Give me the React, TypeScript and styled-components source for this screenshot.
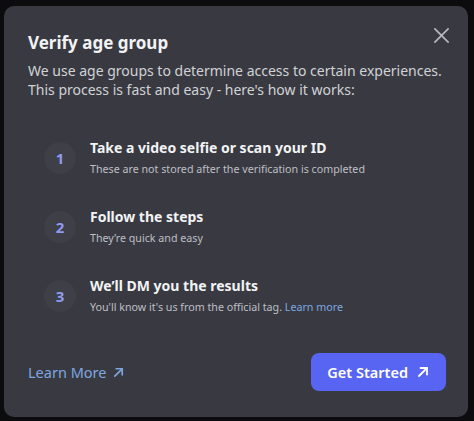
import React from 'react';
import styled, { createGlobalStyle } from 'styled-components';

const GlobalStyle = createGlobalStyle`
  body {
    margin: 0;
    background: #0c0c0e;
    font-family: "Noto Sans", "Open Sans", sans-serif;
  }
`;

const Page = styled.div`
  width: 474px;
  height: 421px;
  padding: 6px 6px 4px 4px;
  box-sizing: border-box;
`;

const Modal = styled.div`
  position: relative;
  height: 100%;
  box-sizing: border-box;
  background: #393a41;
  border-radius: 10px;
  padding: 25px 22px 26px 24px;
  display: flex;
  flex-direction: column;
`;

const CloseButton = styled.button`
  position: absolute;
  top: 14px;
  right: 12px;
  width: 30px;
  height: 30px;
  border: none;
  background: transparent;
  padding: 0;
  display: flex;
  align-items: center;
  justify-content: center;
  color: #b5b8bf;
  cursor: pointer;
`;

const Title = styled.h1`
  margin: 0;
  font-size: 17px;
  font-weight: 700;
  color: #f2f3f5;
  line-height: 24px;
`;

const Description = styled.p`
  margin: 6px 0 0;
  font-size: 14px;
  line-height: 19px;
  color: #d0d2d6;
`;

const StepList = styled.div`
  display: flex;
  flex-direction: column;
  gap: 30px;
  margin-top: 39px;
  padding-left: 16px;
`;

const Step = styled.div`
  display: flex;
  align-items: center;
  gap: 14px;
`;

const StepNumber = styled.div`
  width: 32px;
  height: 32px;
  border-radius: 50%;
  background: #3e3f47;
  color: #8e9bf0;
  font-size: 15px;
  font-weight: 700;
  display: flex;
  align-items: center;
  justify-content: center;
  flex-shrink: 0;
`;

const StepText = styled.div`
  display: flex;
  flex-direction: column;
  gap: 3px;
`;

const StepTitle = styled.div`
  font-size: 14px;
  font-weight: 700;
  color: #f2f3f5;
  line-height: 20px;
`;

const StepSub = styled.div`
  font-size: 10.7px;
  color: #bdbfc5;
  line-height: 16px;
`;

const InlineLink = styled.a`
  color: #7ea6e0;
  text-decoration: none;
`;

const Footer = styled.div`
  margin-top: auto;
  display: flex;
  align-items: center;
  justify-content: space-between;
`;

const FooterLink = styled.a`
  display: flex;
  align-items: center;
  gap: 6px;
  color: #7ea6e0;
  font-size: 14.5px;
  text-decoration: none;
`;

const PrimaryButton = styled.button`
  display: flex;
  align-items: center;
  gap: 8px;
  height: 38px;
  padding: 0 16px;
  border: none;
  border-radius: 8px;
  background: #5865f2;
  color: #ffffff;
  font-family: inherit;
  font-size: 14.5px;
  font-weight: 600;
  cursor: pointer;
`;

const ArrowIcon = ({ size = 14 }: { size?: number }) => (
  <svg width={size} height={size} viewBox="0 0 14 14" fill="none" stroke="currentColor" strokeWidth="1.8" strokeLinecap="round" strokeLinejoin="round">
    <path d="M3 11L11 3" />
    <path d="M4.5 3H11V9.5" />
  </svg>
);

interface StepItem {
  id: number;
  title: string;
  sub: React.ReactNode;
}

const steps: StepItem[] = [
  { id: 1, title: 'Take a video selfie or scan your ID', sub: 'These are not stored after the verification is completed' },
  { id: 2, title: 'Follow the steps', sub: 'They\u2019re quick and easy' },
  {
    id: 3,
    title: 'We\u2019ll DM you the results',
    sub: (
      <>
        You'll know it's us from the official tag. <InlineLink href="#">Learn more</InlineLink>
      </>
    ),
  },
];

const App = () => {
  return (
    <Page>
      <GlobalStyle />
      <Modal>
        <CloseButton aria-label="Close">
          <svg width="17" height="17" viewBox="0 0 18 18" stroke="currentColor" strokeWidth="1.8" strokeLinecap="round">
            <path d="M2 2L16 16M16 2L2 16" />
          </svg>
        </CloseButton>
        <Title>Verify age group</Title>
        <Description>
          We use age groups to determine access to certain experiences.
          <br />
          This process is fast and easy - here's how it works:
        </Description>
        <StepList>
          {steps.map(({ id, title, sub }) => (
            <Step key={id}>
              <StepNumber>{id}</StepNumber>
              <StepText>
                <StepTitle>{title}</StepTitle>
                <StepSub>{sub}</StepSub>
              </StepText>
            </Step>
          ))}
        </StepList>
        <Footer>
          <FooterLink href="#">
            Learn More <ArrowIcon size={13} />
          </FooterLink>
          <PrimaryButton>
            Get Started <ArrowIcon size={14} />
          </PrimaryButton>
        </Footer>
      </Modal>
    </Page>
  );
};

export default App;
